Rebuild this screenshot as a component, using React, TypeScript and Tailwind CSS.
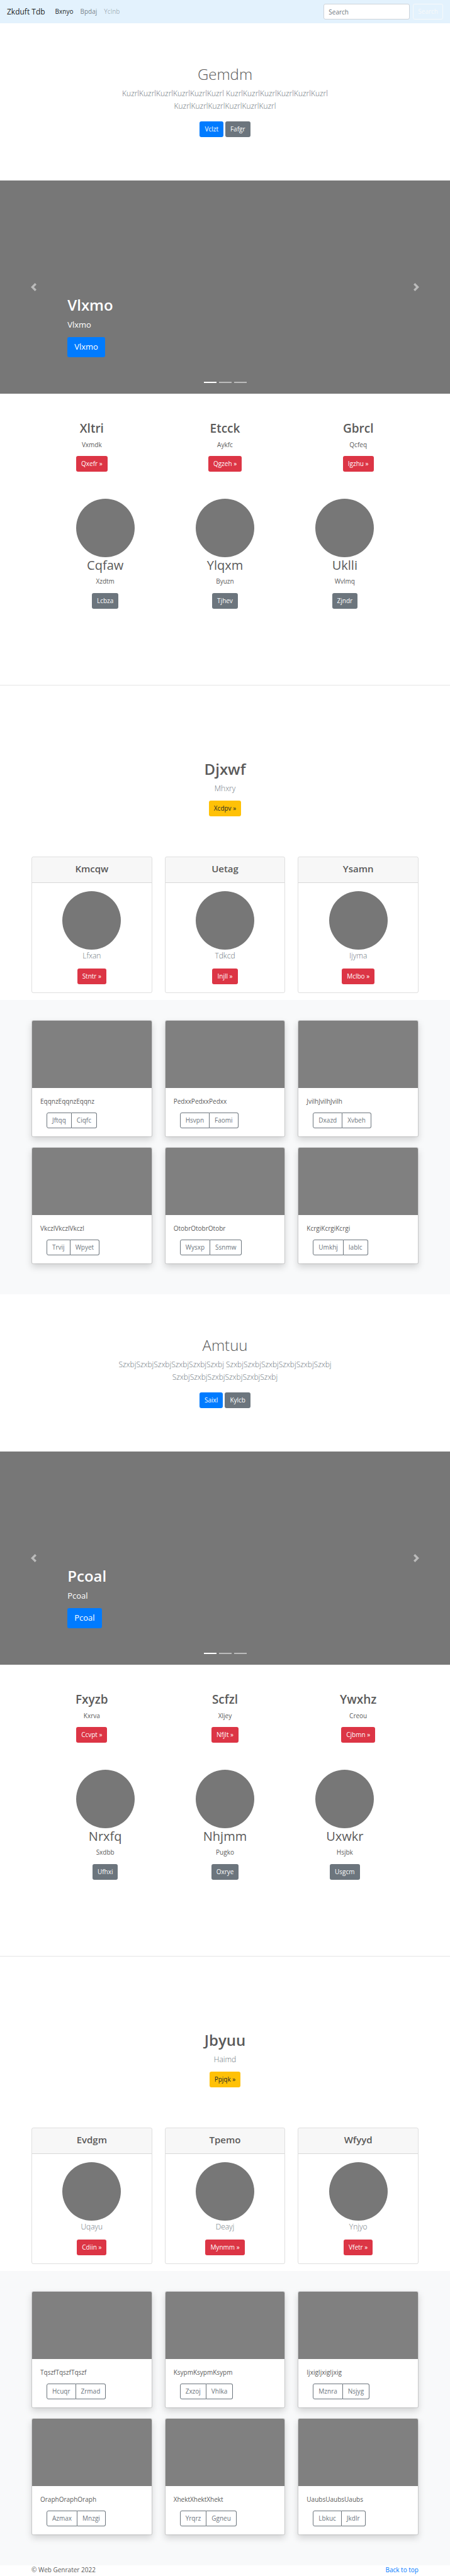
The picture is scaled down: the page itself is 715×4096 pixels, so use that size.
import React from "react";

type Feature = { title: string; text: string; action: string };
type Album = { text: string; actions: [string, string] };
type Block = {
  hero: { title: string; word: string; primary: string; secondary: string };
  slide: string;
  columns: Feature[];
  circles: Feature[];
  banner: Feature;
  cards: Feature[];
  albums: Album[];
};

const blocks: Block[] = [
  {
    hero: { title: "Gemdm", word: "Kuzrl", primary: "Vclzt", secondary: "Fafgr" },
    slide: "Vlxmo",
    columns: [
      { title: "Xltri", text: "Vxmdk", action: "Qxefr »" },
      { title: "Etcck", text: "Aykfc", action: "Qgzeh »" },
      { title: "Gbrcl", text: "Qcfeq", action: "Igzhu »" },
    ],
    circles: [
      { title: "Cqfaw", text: "Xzdtm", action: "Lcbza" },
      { title: "Ylqxm", text: "Byuzn", action: "Tjhev" },
      { title: "Uklli", text: "Wvlmq", action: "Zjndr" },
    ],
    banner: { title: "Djxwf", text: "Mhxry", action: "Xcdpv »" },
    cards: [
      { title: "Kmcqw", text: "Lfxan", action: "Stntr »" },
      { title: "Uetag", text: "Tdkcd", action: "Injll »" },
      { title: "Ysamn", text: "Ijyma", action: "Mclbo »" },
    ],
    albums: [
      { text: "EqqnzEqqnzEqqnz", actions: ["Jftqq", "Ciqfc"] },
      { text: "PedxxPedxxPedxx", actions: ["Hsvpn", "Faomi"] },
      { text: "JvilhJvilhJvilh", actions: ["Dxazd", "Xvbeh"] },
      { text: "VkczlVkczlVkczl", actions: ["Trvij", "Wpyet"] },
      { text: "OtobrOtobrOtobr", actions: ["Wysxp", "Ssnmw"] },
      { text: "KcrgiKcrgiKcrgi", actions: ["Umkhj", "Iablc"] },
    ],
  },
  {
    hero: { title: "Amtuu", word: "Szxbj", primary: "Saixl", secondary: "Kylcb" },
    slide: "Pcoal",
    columns: [
      { title: "Fxyzb", text: "Kxrva", action: "Ccvpt »" },
      { title: "Scfzl", text: "Xljey", action: "Nfjlt »" },
      { title: "Ywxhz", text: "Creou", action: "Cjbmn »" },
    ],
    circles: [
      { title: "Nrxfq", text: "Sxdbb", action: "Ufhxi" },
      { title: "Nhjmm", text: "Pugko", action: "Oxrye" },
      { title: "Uxwkr", text: "Hsjbk", action: "Usgcm" },
    ],
    banner: { title: "Jbyuu", text: "Haimd", action: "Ppjqk »" },
    cards: [
      { title: "Evdgm", text: "Uqayu", action: "Cdiin »" },
      { title: "Tpemo", text: "Deayj", action: "Mynmm »" },
      { title: "Wfyyd", text: "Ynjyo", action: "Vfetr »" },
    ],
    albums: [
      { text: "TqszfTqszfTqszf", actions: ["Hcuqr", "Zrmad"] },
      { text: "KsypmKsypmKsypm", actions: ["Zxzoj", "Vhlka"] },
      { text: "IjxigIjxigIjxig", actions: ["Mznra", "Nsjyg"] },
      { text: "OraphOraphOraph", actions: ["Azmax", "Mnzgi"] },
      { text: "XhektXhektXhekt", actions: ["Yrqrz", "Ggneu"] },
      { text: "UaubsUaubsUaubs", actions: ["Lbkuc", "Jkdlr"] },
    ],
  },
];

const tones = {
  primary: "bg-[#007bff] text-white",
  secondary: "bg-[#6c757d] text-white",
  danger: "bg-[#dc3545] text-white",
  warning: "bg-[#ffc107] text-[#212529]",
};

function Btn({ tone, children }: { tone: keyof typeof tones; children: React.ReactNode }) {
  return (
    <a href="#" className={`inline-flex h-[25px] items-center rounded-[3px] px-2 text-[10px] ${tones[tone]}`}>
      {children}
    </a>
  );
}

function Navbar() {
  return (
    <nav className="flex h-[37px] items-center bg-[#e3f2fd] px-[11px]">
      <a href="#" className="mr-4 text-[12px] text-black/90">Zkduft Tdb</a>
      <ul className="flex flex-1 gap-[11px] text-[10px]">
        <li><a href="#" className="text-black/90">Bxnyo</a></li>
        <li><a href="#" className="text-black/50">Bpdaj</a></li>
        <li><a href="#" aria-disabled="true" className="text-black/30">Yclnb</a></li>
      </ul>
      <form className="flex items-center gap-[5px]">
        <input
          type="search"
          aria-label="Search"
          placeholder="Search"
          className="h-[25px] w-[137px] rounded-[3px] border border-[#ced4da] bg-white px-[7px] text-[10px] placeholder:text-[#6c757d]"
        />
        <button type="button" className="h-[25px] rounded-[3px] border border-[#f8f9fa] px-[7px] text-[10px] text-[#f8f9fa]">
          Search
        </button>
      </form>
    </nav>
  );
}

function Hero({ title, word, primary, secondary }: Block["hero"]) {
  const run = word.repeat(6);
  return (
    <section className="flex flex-col items-center pt-[65px] pb-[69px] text-center">
      <h1 className="text-[24px] leading-8 font-light">{title}</h1>
      <p className="mt-[5px] max-w-[420px] text-[12px] leading-5 font-light text-[#6c757d]">
        {run} {run} {run}
      </p>
      <div className="mt-[14px] flex gap-[3px]">
        <Btn tone="primary">{primary}</Btn>
        <Btn tone="secondary">{secondary}</Btn>
      </div>
    </section>
  );
}

function Chevron({ flip }: { flip?: boolean }) {
  return (
    <svg viewBox="0 0 8 8" aria-hidden="true" className={flip ? "size-[13px] rotate-180 fill-white" : "size-[13px] fill-white"}>
      <path d="M5.25 0l-4 4 4 4 1.5-1.5-2.5-2.5 2.5-2.5-1.5-1.5z" />
    </svg>
  );
}

function Carousel({ label }: { label: string }) {
  return (
    <section className="flex h-[339px] bg-[#777]">
      <button type="button" aria-label="Previous" className="flex w-[15%] items-center justify-center opacity-50">
        <Chevron />
      </button>
      <div className="flex flex-1 flex-col justify-end pb-[17px] text-white">
        <h1 className="text-[24px] leading-8 font-semibold">{label}</h1>
        <p className="mt-[5px] text-[13px] leading-5">{label}</p>
        <a href="#" className="mt-[10px] flex h-8 items-center self-start rounded-[3px] bg-[#007bff] px-[11px] text-[13px]">
          {label}
        </a>
        <div className="mt-[39px] flex justify-center gap-1">
          <span className="h-[2px] w-5 bg-white" />
          <span className="h-[2px] w-5 bg-white/50" />
          <span className="h-[2px] w-5 bg-white/50" />
        </div>
      </div>
      <button type="button" aria-label="Next" className="flex w-[15%] items-center justify-center opacity-50">
        <Chevron flip />
      </button>
    </section>
  );
}

function Circle() {
  return <div className="size-[93px] rounded-full bg-[#777]" />;
}

function Columns({ items }: { items: Feature[] }) {
  return (
    <section className="grid grid-cols-3 gap-5 px-[50px] pt-[43px]">
      {items.map((f) => (
        <div key={f.title} className="flex flex-col items-center">
          <h2 className="text-[19px] leading-[25px] font-semibold">{f.title}</h2>
          <p className="mt-[5px] mb-[10px] text-[10px] leading-4">{f.text}</p>
          <Btn tone="danger">{f.action}</Btn>
        </div>
      ))}
    </section>
  );
}

function Circles({ items }: { items: Feature[] }) {
  return (
    <section className="grid grid-cols-3 px-[72px] pt-[43px] pb-[121px]">
      {items.map((f) => (
        <div key={f.title} className="flex flex-col items-center">
          <Circle />
          <h2 className="text-[20px] leading-[25px]">{f.title}</h2>
          <p className="mt-[5px] mb-[11px] text-[10px] leading-4">{f.text}</p>
          <Btn tone="secondary">{f.action}</Btn>
        </div>
      ))}
    </section>
  );
}

function Banner({ title, text, action }: Feature) {
  return (
    <section className="flex flex-col items-center pt-[117px] pb-16">
      <h1 className="text-[24px] leading-8 font-semibold">{title}</h1>
      <p className="mt-[5px] mb-[9px] text-[12px] leading-5 font-light text-[#6c757d]">{text}</p>
      <Btn tone="warning">{action}</Btn>
    </section>
  );
}

function Cards({ items }: { items: Feature[] }) {
  return (
    <section className="grid grid-cols-3 gap-5 px-[50px] pb-[11px]">
      {items.map((f) => (
        <article key={f.title} className="overflow-hidden rounded-[3px] border border-black/[.125]">
          <h4 className="flex h-[41px] items-center justify-center border-b border-black/[.125] bg-black/[.03] pb-1 text-[15px] font-semibold">
            {f.title}
          </h4>
          <div className="flex flex-col items-center py-[13px]">
            <Circle />
            <p className="mb-[10px] text-[12px] leading-5 font-light text-[#6c757d]">{f.text}</p>
            <Btn tone="danger">{f.action}</Btn>
          </div>
        </article>
      ))}
    </section>
  );
}

function Albums({ items }: { items: Album[] }) {
  return (
    <section className="grid grid-cols-3 gap-x-5 gap-y-4 bg-[#f8f9fa] px-[50px] pt-8 pb-12">
      {items.map((a) => (
        <article
          key={a.text}
          className="overflow-hidden rounded-[3px] border border-black/[.125] bg-white bg-clip-padding shadow-[0_5px_11px_rgba(0,0,0,0.15)]"
        >
          <div className="h-[107px] bg-[#808080]" />
          <div className="px-[13px] py-[13px]">
            <p className="text-[10px] leading-4">{a.text}</p>
            <div className="mt-[10px] ml-[10px] flex">
              <button type="button" className="h-[25px] rounded-l-[3px] border border-[#6c757d] px-2 text-[10px] text-[#6c757d]">
                {a.actions[0]}
              </button>
              <button type="button" className="h-[25px] rounded-r-[3px] border border-l-0 border-[#6c757d] px-2 text-[10px] text-[#6c757d]">
                {a.actions[1]}
              </button>
            </div>
          </div>
        </article>
      ))}
    </section>
  );
}

export default function App() {
  return (
    <div className="bg-white font-['Open_Sans','Noto_Sans',sans-serif] text-[#5a5a5a]">
      <Navbar />
      <main>
        {blocks.map((b) => (
          <React.Fragment key={b.slide}>
            <Hero {...b.hero} />
            <Carousel label={b.slide} />
            <Columns items={b.columns} />
            <Circles items={b.circles} />
            <hr className="border-black/10" />
            <Banner {...b.banner} />
            <Cards items={b.cards} />
            <Albums items={b.albums} />
          </React.Fragment>
        ))}
      </main>
      <footer className="flex justify-between px-[50px] text-[10px] leading-[15px]">
        <p>© Web Genrater 2022</p>
        <a href="#" className="text-[#007bff]">Back to top</a>
      </footer>
    </div>
  );
}
